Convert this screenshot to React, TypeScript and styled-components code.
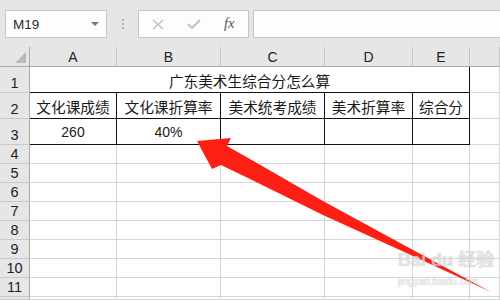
import React from "react";
import styled, { createGlobalStyle } from "styled-components";

const GlobalStyle = createGlobalStyle`
  html, body { margin: 0; padding: 0; background: #ffffff; overflow: hidden; }
  #root { width: 500px; height: 300px; }
`;

const GRID = "#d6d6d6";
const HEAD = "#e6e6e6";
const HEAD_LINE = "#ababab";
const INK = "#111";

const Window = styled.div`
  position: relative;
  width: 500px;
  height: 300px;
  overflow: hidden;
  display: flex;
  flex-direction: column;
  background: ${HEAD};
`;

const Toolbar = styled.div`
  height: 47px;
  flex: none;
  display: flex;
  align-items: flex-start;
  padding: 10px 0 0 5px;
  box-sizing: border-box;
  background: ${HEAD};
`;

const Box = styled.div`
  height: 28px;
  box-sizing: border-box;
  background: #fdfdfd;
  border: 1px solid #c6c6c6;
  display: flex;
  align-items: center;
`;

const NameBox = styled(Box)`
  width: 102px;
  padding: 0 0 0 7px;
  justify-content: space-between;
`;

const NameText = styled.span`
  font-family: "Liberation Sans", Arial, sans-serif;
  font-size: 13.5px;
  color: #2b2b2b;
  padding-top: 1px;
`;

const Caret = styled.span`
  width: 0;
  height: 0;
  margin-right: 7px;
  border-left: 4px solid transparent;
  border-right: 4px solid transparent;
  border-top: 4px solid #7a7a7a;
`;

const Grip = styled.div`
  width: 31px;
  height: 28px;
  display: flex;
  flex-direction: column;
  align-items: center;
  justify-content: center;
  gap: 2px;
  & > i {
    display: block;
    width: 2px;
    height: 2px;
    background: #b0b0b0;
  }
`;

const FxBox = styled(Box)`
  width: 111px;
  padding: 0 0 0 13px;
`;

const IconSlot = styled.span`
  width: 35px;
  height: 14px;
  display: flex;
  align-items: center;
  justify-content: flex-start;
`;

const FxLabel = styled.span`
  font-family: "Liberation Serif", "Times New Roman", serif;
  font-style: italic;
  font-size: 14.5px;
  color: #555;
  margin-left: 2px;
  padding-bottom: 2px;
`;

const FormulaInput = styled(Box)`
  flex: 1;
  margin-left: 4px;
  border-right: none;
`;

const Sheet = styled.div`
  flex: 1;
  display: grid;
  grid-template-columns: 30px 87px 104px 104px 88px 57px 1fr;
  grid-template-rows: 20px 26px 26px 26px repeat(8, 19px) 1fr;
  background: #fff;
`;

const Corner = styled.div`
  background: ${HEAD};
  border-right: 1px solid ${HEAD_LINE};
  border-bottom: 1px solid ${HEAD_LINE};
  box-sizing: border-box;
  display: flex;
  align-items: flex-end;
  justify-content: flex-end;
  padding: 0 3px 3px 0;
  &::after {
    content: "";
    width: 0;
    height: 0;
    border-left: 11px solid transparent;
    border-bottom: 11px solid #b9b9b9;
  }
`;

const ColHead = styled.div`
  background: ${HEAD};
  border-bottom: 1px solid ${HEAD_LINE};
  border-right: 1px solid #c4c4c4;
  box-sizing: border-box;
  display: flex;
  align-items: flex-end;
  justify-content: center;
  padding-bottom: 1px;
  font-family: "Liberation Sans", Arial, sans-serif;
  font-size: 14px;
  color: #222;
`;

const RowHead = styled.div`
  background: ${HEAD};
  border-right: 1px solid ${HEAD_LINE};
  border-bottom: 1px solid #c9c9c9;
  box-sizing: border-box;
  display: flex;
  align-items: flex-end;
  justify-content: center;
  overflow: hidden;
  font-family: "Liberation Sans", Arial, sans-serif;
  font-size: 14.5px;
  line-height: 18px;
  color: #222;
`;

const Cell = styled.div<{ $span?: number; $right?: boolean; $bottom?: boolean; $num?: boolean }>`
  grid-column: span ${(p) => p.$span ?? 1};
  box-sizing: border-box;
  border-right: 1px solid ${(p) => (p.$right ? INK : GRID)};
  border-bottom: 1px solid ${(p) => (p.$bottom ? INK : GRID)};
  display: flex;
  align-items: center;
  justify-content: center;
  white-space: nowrap;
  overflow: hidden;
  font-family: ${(p) =>
    p.$num
      ? `"Liberation Sans", Arial, sans-serif`
      : `"Noto Sans CJK SC", "Noto Sans", sans-serif`};
  font-size: ${(p) => (p.$num ? "14px" : "14.67px")};
  color: #1a1a1a;
  padding-top: 1px;
`;

const Overlay = styled.svg`
  position: absolute;
  left: 0;
  top: 0;
  width: 500px;
  height: 300px;
  pointer-events: none;
`;

const Watermark = styled.div`
  position: absolute;
  left: 398px;
  top: 249px;
  display: flex;
  flex-direction: column;
  align-items: flex-start;
  white-space: nowrap;
  pointer-events: none;
  color: rgba(255, 255, 255, 0.5);
  text-shadow: 0 0 1px rgba(150, 150, 150, 0.35), 0 0 1px rgba(150, 150, 150, 0.35);
`;

const MarkTitle = styled.span`
  font-family: "Liberation Sans", Arial, "Noto Sans CJK SC", sans-serif;
  font-weight: bold;
  font-size: 18px;
  line-height: 22px;
`;

const MarkUrl = styled.span`
  font-family: "Liberation Sans", Arial, sans-serif;
  font-size: 10px;
  line-height: 12px;
  margin-top: 5px;
`;

const cols = ["A", "B", "C", "D", "E", ""];
const headers = ["文化课成绩", "文化课折算率", "美术统考成绩", "美术折算率", "综合分"];

export default function App() {
  return (
    <>
      <GlobalStyle />
      <Window>
        <Toolbar>
          <NameBox>
            <NameText>M19</NameText>
            <Caret />
          </NameBox>
          <Grip>
            <i />
            <i />
            <i />
          </Grip>
          <FxBox>
            <IconSlot>
              <svg width="12" height="11" viewBox="0 0 12 11">
                <path d="M1 1 L11 10 M11 1 L1 10" stroke="#c2c2c2" strokeWidth="1.4" fill="none" />
              </svg>
            </IconSlot>
            <IconSlot>
              <svg width="14" height="10" viewBox="0 0 14 10">
                <path d="M1 5 L5 9 L13 1" stroke="#c2c2c2" strokeWidth="2" fill="none" />
              </svg>
            </IconSlot>
            <FxLabel>fx</FxLabel>
          </FxBox>
          <FormulaInput />
        </Toolbar>
        <Sheet>
          <Corner />
          {cols.map((c, i) => (
            <ColHead key={i}>{c}</ColHead>
          ))}

          <RowHead>1</RowHead>
          <Cell $span={5} $right $bottom>
            广东美术生综合分怎么算
          </Cell>
          <Cell />

          <RowHead>2</RowHead>
          {headers.map((h) => (
            <Cell key={h} $right $bottom>
              {h}
            </Cell>
          ))}
          <Cell />

          <RowHead>3</RowHead>
          <Cell $right $bottom $num>
            260
          </Cell>
          <Cell $right $bottom $num>
            40%
          </Cell>
          <Cell $right $bottom />
          <Cell $right $bottom />
          <Cell $right $bottom />
          <Cell />

          {[4, 5, 6, 7, 8, 9, 10, 11].map((r) => (
            <React.Fragment key={r}>
              <RowHead>{r}</RowHead>
              {cols.map((_, i) => (
                <Cell key={i} />
              ))}
            </React.Fragment>
          ))}
          <RowHead />
          {cols.map((_, i) => (
            <Cell key={`last-${i}`} />
          ))}
        </Sheet>
        <Overlay viewBox="0 0 500 300">
          <polygon
            points="197,141 231,138 227,146 250,159 323,201 413,250 491,292 413,256 323,215 250,179 221,165 212,169"
            fill="#fd1f13"
          />
        </Overlay>
        <Watermark>
          <MarkTitle>Bai du 经验</MarkTitle>
          <MarkUrl>jingyan.baidu.com</MarkUrl>
        </Watermark>
      </Window>
    </>
  );
}
